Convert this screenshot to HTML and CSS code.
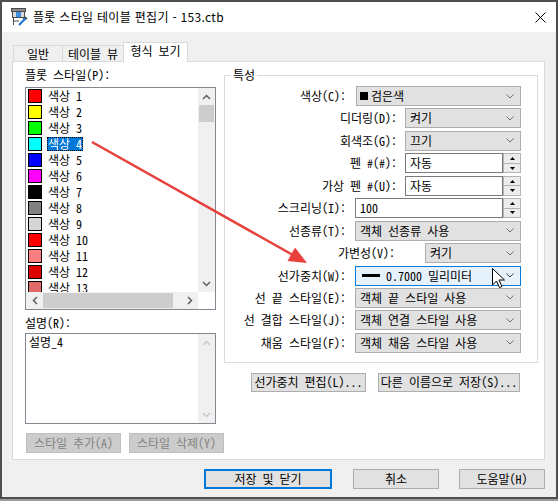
FILE: index.html
```html
<!DOCTYPE html>
<html lang="ko">
<head>
    <meta charset="UTF-8">
    <title>플롯 스타일 테이블 편집기 - 153.ctb</title>
    <link rel="stylesheet" href="styles.css">
</head>
<body>
    <div class="window">
        <!-- Title bar -->
        <div class="titlebar">
            <svg class="app-icon" width="18" height="18" viewBox="0 0 18 18">
                <rect x="1.5" y="0.5" width="14" height="3" fill="#8a8a8a" stroke="#4a4a4a"/>
                <rect x="2.5" y="3.5" width="12" height="6" fill="#d8d8d8" stroke="#4a4a4a"/>
                <rect x="6" y="4" width="5" height="5" fill="#3d8ee0"/>
                <path d="M3.5 10 V17 M13.5 10 V13 M3.5 13 H9" stroke="#4a4a4a" fill="none"/>
                <path d="M9 17 L16 10" stroke="#1e73d2" stroke-width="2.2"/>
                <path d="M15 9 L17 11" stroke="#333" stroke-width="1.2"/>
            </svg>
            <span class="title">플롯 스타일 테이블 편집기 - 153.ctb</span>
            <svg class="close-x" width="11" height="11" viewBox="0 0 11 11">
                <path d="M0.5 0.5 L10.5 10.5 M10.5 0.5 L0.5 10.5" stroke="#000" stroke-width="1"/>
            </svg>
        </div>

        <!-- Tabs -->
        <div class="tabs">
            <div class="tab tab-general">일반</div>
            <div class="tab tab-table">테이블 뷰</div>
            <div class="tab tab-form active">형식 보기</div>
        </div>

        <div class="panel">
            <!-- Left column: style list + description -->
            <div class="left-col">
                <div class="field-label">플롯 스타일(P):</div>
                <div class="listbox">
                    <div class="list-items">
                        <div class="item"><span class="swatch c1"></span><span class="item-text">색상 1</span></div>
                        <div class="item"><span class="swatch c2"></span><span class="item-text">색상 2</span></div>
                        <div class="item"><span class="swatch c3"></span><span class="item-text">색상 3</span></div>
                        <div class="item"><span class="swatch c4"></span><span class="item-text selected">색상 4</span></div>
                        <div class="item"><span class="swatch c5"></span><span class="item-text">색상 5</span></div>
                        <div class="item"><span class="swatch c6"></span><span class="item-text">색상 6</span></div>
                        <div class="item"><span class="swatch c7"></span><span class="item-text">색상 7</span></div>
                        <div class="item"><span class="swatch c8"></span><span class="item-text">색상 8</span></div>
                        <div class="item"><span class="swatch c9"></span><span class="item-text">색상 9</span></div>
                        <div class="item"><span class="swatch c10"></span><span class="item-text">색상 10</span></div>
                        <div class="item"><span class="swatch c11"></span><span class="item-text">색상 11</span></div>
                        <div class="item"><span class="swatch c12"></span><span class="item-text">색상 12</span></div>
                        <div class="item"><span class="swatch c13"></span><span class="item-text">색상 13</span></div>
                    </div>
                    <div class="vscroll">
                        <div class="sb-arrow"><svg width="9" height="6" viewBox="0 0 9 6"><path d="M1 5 L4.5 1.5 L8 5" stroke="#606060" stroke-width="1.5" fill="none"/></svg></div>
                        <div class="vthumb"></div>
                        <div class="sb-fill"></div>
                        <div class="sb-arrow"><svg width="9" height="6" viewBox="0 0 9 6"><path d="M1 1 L4.5 4.5 L8 1" stroke="#606060" stroke-width="1.5" fill="none"/></svg></div>
                    </div>
                    <div class="hscroll">
                        <div class="sb-arrow"><svg width="6" height="9" viewBox="0 0 6 9"><path d="M5 1 L1.5 4.5 L5 8" stroke="#606060" stroke-width="1.5" fill="none"/></svg></div>
                        <div class="hthumb"></div>
                        <div class="sb-fill"></div>
                        <div class="sb-arrow"><svg width="6" height="9" viewBox="0 0 6 9"><path d="M1 1 L4.5 4.5 L1 8" stroke="#606060" stroke-width="1.5" fill="none"/></svg></div>
                    </div>
                    <div class="corner"></div>
                </div>

                <div class="field-label desc-label">설명(R):</div>
                <div class="descbox">
                    <div class="desc-text">설명_4</div>
                    <div class="vscroll disabled">
                        <div class="sb-arrow"><svg width="9" height="6" viewBox="0 0 9 6"><path d="M1 5 L4.5 1.5 L8 5" stroke="#c8c8c8" stroke-width="1.5" fill="none"/></svg></div>
                        <div class="sb-fill"></div>
                        <div class="sb-arrow"><svg width="9" height="6" viewBox="0 0 9 6"><path d="M1 1 L4.5 4.5 L8 1" stroke="#c8c8c8" stroke-width="1.5" fill="none"/></svg></div>
                    </div>
                </div>

                <div class="left-buttons">
                    <button class="btn" disabled>스타일 추가(A)</button>
                    <button class="btn" disabled>스타일 삭제(Y)</button>
                </div>
            </div>

            <!-- Right column: properties -->
            <div class="right-col">
                <fieldset class="props">
                    <legend>특성</legend>
                    <div class="rows">
                        <div class="row color-row">
                            <label>색상(C):</label>
                            <div class="combo">
                                <span class="color-chip"></span>
                                <span>검은색</span>
                                <svg class="chevron" width="8" height="5" viewBox="0 0 8 5"><path d="M0.5 0.5 L4 4 L7.5 0.5" stroke="#707070" fill="none"/></svg>
                            </div>
                        </div>
                        <div class="row narrow">
                            <label>디더링(D):</label>
                            <div class="combo">
                                <span>켜기</span>
                                <svg class="chevron" width="8" height="5" viewBox="0 0 8 5"><path d="M0.5 0.5 L4 4 L7.5 0.5" stroke="#707070" fill="none"/></svg>
                            </div>
                        </div>
                        <div class="row narrow">
                            <label>회색조(G):</label>
                            <div class="combo">
                                <span>끄기</span>
                                <svg class="chevron" width="8" height="5" viewBox="0 0 8 5"><path d="M0.5 0.5 L4 4 L7.5 0.5" stroke="#707070" fill="none"/></svg>
                            </div>
                        </div>
                        <div class="row narrow">
                            <label>펜 #(#):</label>
                            <div class="spin">
                                <div class="spin-input">자동</div>
                                <div class="spin-btns">
                                    <div class="spin-btn"><svg width="5" height="3" viewBox="0 0 5 3"><path d="M0 3 L2.5 0 L5 3 Z" fill="#000"/></svg></div>
                                    <div class="spin-btn"><svg width="5" height="3" viewBox="0 0 5 3"><path d="M0 0 L2.5 3 L5 0 Z" fill="#000"/></svg></div>
                                </div>
                            </div>
                        </div>
                        <div class="row narrow">
                            <label>가상 펜 #(U):</label>
                            <div class="spin">
                                <div class="spin-input">자동</div>
                                <div class="spin-btns">
                                    <div class="spin-btn"><svg width="5" height="3" viewBox="0 0 5 3"><path d="M0 3 L2.5 0 L5 3 Z" fill="#000"/></svg></div>
                                    <div class="spin-btn"><svg width="5" height="3" viewBox="0 0 5 3"><path d="M0 0 L2.5 3 L5 0 Z" fill="#000"/></svg></div>
                                </div>
                            </div>
                        </div>
                        <div class="row">
                            <label>스크리닝(I):</label>
                            <div class="spin">
                                <div class="spin-input">100</div>
                                <div class="spin-btns">
                                    <div class="spin-btn"><svg width="5" height="3" viewBox="0 0 5 3"><path d="M0 3 L2.5 0 L5 3 Z" fill="#000"/></svg></div>
                                    <div class="spin-btn"><svg width="5" height="3" viewBox="0 0 5 3"><path d="M0 0 L2.5 3 L5 0 Z" fill="#000"/></svg></div>
                                </div>
                            </div>
                        </div>
                        <div class="row">
                            <label>선종류(T):</label>
                            <div class="combo">
                                <span>객체 선종류 사용</span>
                                <svg class="chevron" width="8" height="5" viewBox="0 0 8 5"><path d="M0.5 0.5 L4 4 L7.5 0.5" stroke="#707070" fill="none"/></svg>
                            </div>
                        </div>
                        <div class="row small">
                            <label>가변성(V):</label>
                            <div class="combo">
                                <span>켜기</span>
                                <svg class="chevron" width="8" height="5" viewBox="0 0 8 5"><path d="M0.5 0.5 L4 4 L7.5 0.5" stroke="#707070" fill="none"/></svg>
                            </div>
                        </div>
                        <div class="row">
                            <label>선가중치(W):</label>
                            <div class="combo hover">
                                <span class="weight-line"></span>
                                <span>0.7000 밀리미터</span>
                                <svg class="chevron" width="8" height="5" viewBox="0 0 8 5"><path d="M0.5 0.5 L4 4 L7.5 0.5" stroke="#404040" fill="none"/></svg>
                            </div>
                        </div>
                        <div class="row">
                            <label>선 끝 스타일(E):</label>
                            <div class="combo">
                                <span>객체 끝 스타일 사용</span>
                                <svg class="chevron" width="8" height="5" viewBox="0 0 8 5"><path d="M0.5 0.5 L4 4 L7.5 0.5" stroke="#707070" fill="none"/></svg>
                            </div>
                        </div>
                        <div class="row">
                            <label>선 결합 스타일(J):</label>
                            <div class="combo">
                                <span>객체 연결 스타일 사용</span>
                                <svg class="chevron" width="8" height="5" viewBox="0 0 8 5"><path d="M0.5 0.5 L4 4 L7.5 0.5" stroke="#707070" fill="none"/></svg>
                            </div>
                        </div>
                        <div class="row">
                            <label>채움 스타일(F):</label>
                            <div class="combo">
                                <span>객체 채움 스타일 사용</span>
                                <svg class="chevron" width="8" height="5" viewBox="0 0 8 5"><path d="M0.5 0.5 L4 4 L7.5 0.5" stroke="#707070" fill="none"/></svg>
                            </div>
                        </div>
                    </div>
                </fieldset>

                <div class="right-buttons">
                    <button class="btn btn-weights">선가중치 편집(L)...</button>
                    <button class="btn btn-saveas">다른 이름으로 저장(S)...</button>
                </div>
            </div>
        </div>

        <!-- Dialog buttons -->
        <div class="footer">
            <button class="btn default btn-save">저장 및 닫기</button>
            <button class="btn btn-cancel">취소</button>
            <button class="btn btn-help">도움말(H)</button>
        </div>
    </div>

    <!-- Annotation arrow and mouse pointer drawn over the dialog -->
    <svg class="overlay" width="558" height="501" viewBox="0 0 558 501">
        <line x1="92" y1="142" x2="292" y2="254.5" stroke="#e8413c" stroke-width="2.5"/>
        <polygon points="307,263 287.5,261 295,247.5" fill="#e8413c"/>
        <path d="M492.5 268.5 L492.5 285 L496.5 281 L499.5 287.5 L502 286.5 L499 280 L504.5 280 Z" fill="#fff" stroke="#000" stroke-width="1" stroke-linejoin="round"/>
    </svg>
</body>
</html>
```

FILE: styles.css
```css
body {
    margin: 0;
    position: relative;
    width: 558px;
    height: 501px;
    background: #9c9c9c;
    font-family: "Noto Sans Mono CJK KR", "Noto Sans CJK KR", "Noto Sans", sans-serif;
    font-size: 12px;
    color: #000;
}

.window {
    width: 558px;
    height: 499px;
    box-sizing: border-box;
    border: 2px solid #4f4f4f;
    background: #f0f0f0;
    display: flex;
    flex-direction: column;
}

.titlebar {
    height: 30px;
    flex: none;
    background: #fff;
    display: flex;
    align-items: center;
    padding: 0 10px 0 8px;
}

.title {
    margin-left: 5px;
    flex: 1;
    line-height: 14px;
    font-family: "Noto Sans CJK KR", sans-serif;
    letter-spacing: 0.3px;
}

/* Tabs */
.tabs {
    display: flex;
    align-items: flex-end;
    height: 20px;
    margin-top: 9px;
    padding-left: 11px;
    position: relative;
    z-index: 1;
}

.tab {
    height: 16px;
    box-sizing: border-box;
    border: 1px solid #d9d9d9;
    border-bottom: none;
    background: #f0f0f0;
    line-height: 15px;
    text-align: center;
    margin-left: -1px;
}

.tab-general { width: 50px; margin-left: 0; }
.tab-table { width: 62px; }
.tab-form { width: 65px; }

.tab.active {
    height: 20px;
    background: #fff;
    margin-bottom: -1px;
    line-height: 16px;
}

.panel {
    margin-left: 10px;
    width: 533px;
    height: 399px;
    flex: none;
    box-sizing: border-box;
    border: 1px solid #d9d9d9;
    background: #fff;
    display: flex;
    padding-left: 12px;
}

/* Left column */
.left-col {
    width: 199px;
    display: flex;
    flex-direction: column;
}

.field-label {
    line-height: 14px;
    margin-top: 6px;
    white-space: nowrap;
}

.listbox {
    margin-top: 5px;
    width: 191px;
    height: 223px;
    box-sizing: border-box;
    border: 1px solid #828790;
    display: grid;
    grid-template-columns: 172px 17px;
    grid-template-rows: 204px 17px;
}

.list-items {
    overflow: hidden;
}

.item {
    height: 16px;
    display: flex;
    align-items: center;
}

.swatch {
    width: 14px;
    height: 14px;
    box-sizing: border-box;
    border: 1px solid #000;
    margin-left: 2px;
}

.c1 { background: #ff0000; }
.c2 { background: #ffff00; }
.c3 { background: #00ff00; }
.c4 { background: #00ffff; }
.c5 { background: #0000ff; }
.c6 { background: #ff00ff; }
.c7 { background: #000000; }
.c8 { background: #808080; }
.c9 { background: #d6d6d6; }
.c10 { background: #ff0000; }
.c11 { background: #ff8080; }
.c12 { background: #dd0000; }
.c13 { background: #e06a6a; }

.item-text {
    margin-left: 5px;
    padding: 0 1px;
    line-height: 14px;
    white-space: nowrap;
}

.item-text.selected {
    background: #0078d7;
    color: #fff;
    outline: 1px dotted #000;
    outline-offset: -1px;
}

.vscroll {
    background: #f0f0f0;
    display: flex;
    flex-direction: column;
}

.hscroll {
    background: #f0f0f0;
    display: flex;
}

.sb-arrow {
    width: 17px;
    height: 17px;
    flex: none;
    display: flex;
    align-items: center;
    justify-content: center;
}

.sb-fill {
    flex: 1;
}

.vthumb {
    height: 17px;
    margin: 0 1px;
    background: #cdcdcd;
}

.hthumb {
    width: 130px;
    margin: 1px 0;
    background: #cdcdcd;
}

.corner {
    background: #fff;
}

.desc-label {
    margin-top: 6px;
}

.descbox {
    margin-top: 3px;
    width: 191px;
    height: 91px;
    box-sizing: border-box;
    border: 1px solid #828790;
    display: flex;
}

.desc-text {
    flex: 1;
    padding: 1px 3px;
    line-height: 14px;
}

.descbox .vscroll {
    width: 17px;
}

.left-buttons {
    display: flex;
    gap: 8px;
    margin-top: 9px;
    margin-left: 1px;
}

.left-buttons .btn {
    width: 95px;
}

/* Buttons */
.btn {
    height: 20px;
    box-sizing: border-box;
    border: 1px solid #adadad;
    background: #e1e1e1;
    font-family: inherit;
    font-size: 12px;
    line-height: 16px;
    color: #000;
    padding: 0;
    white-space: nowrap;
}

.btn:disabled {
    background: #cccccc;
    border-color: #bfbfbf;
    color: #838383;
}

.btn.default {
    border: 2px solid #0078d7;
}

/* Right column */
.right-col {
    width: 314px;
    display: flex;
    flex-direction: column;
}

.props {
    margin: 6px 0 0;
    padding: 4px 16px 9px 0;
    border: 1px solid #dcdcdc;
    min-width: 0;
}

.props legend {
    margin-left: 6px;
    padding: 0 2px;
    line-height: 14px;
}

.rows {
    display: flex;
    flex-direction: column;
    gap: 2.45px;
}

.row {
    display: flex;
    justify-content: flex-end;
    align-items: center;
    height: 20px;
}

.row label {
    margin-right: 9px;
    line-height: 14px;
    white-space: nowrap;
}

.combo {
    width: 166px;
    height: 20px;
    box-sizing: border-box;
    border: 1px solid #adadad;
    background: #e1e1e1;
    display: flex;
    align-items: center;
    padding-left: 4px;
    line-height: 14px;
    white-space: nowrap;
}

.color-row label { margin-right: 10px; }
.color-row .combo { width: 165px; padding-left: 3px; }

.row.narrow label { margin-right: 8px; }
.row.narrow .combo,
.row.narrow .spin { width: 116px; }

.row.small label { margin-right: 30px; }
.row.small .combo { width: 96px; }

.combo.hover {
    background: #e5f1fb;
    border-color: #0078d7;
}

.chevron {
    margin-left: auto;
    margin-right: 6px;
    flex: none;
}

.color-chip {
    width: 8px;
    height: 8px;
    background: #000;
    margin-right: 3px;
}

.weight-line {
    width: 18px;
    height: 3px;
    background: #000;
    margin: 0 6px 0 2px;
}

.spin {
    width: 166px;
    height: 20px;
    display: flex;
}

.spin-input {
    flex: 1;
    box-sizing: border-box;
    border: 1px solid #7a7a7a;
    background: #fff;
    padding-left: 4px;
    line-height: 17px;
}

.spin-btns {
    width: 18px;
    display: flex;
    flex-direction: column;
}

.spin-btn {
    flex: 1;
    box-sizing: border-box;
    border: 1px solid #b4b4b4;
    background: #ececec;
    display: flex;
    align-items: center;
    justify-content: center;
}

.spin-btn + .spin-btn {
    border-top: none;
}

.right-buttons {
    display: flex;
    gap: 12px;
    margin-top: 10px;
    margin-left: 27px;
}

.right-buttons .btn {
    height: 19px;
}

.btn-weights { width: 115px; }
.btn-saveas { width: 142px; }

/* Footer */
.footer {
    display: flex;
    justify-content: flex-end;
    padding: 9px 11px 0 0;
}

.btn-save { width: 128px; }
.btn-cancel { width: 86px; margin-left: 21px; }
.btn-help { width: 86px; margin-left: 20px; }

.overlay {
    position: absolute;
    top: 0;
    left: 0;
    pointer-events: none;
}
```
